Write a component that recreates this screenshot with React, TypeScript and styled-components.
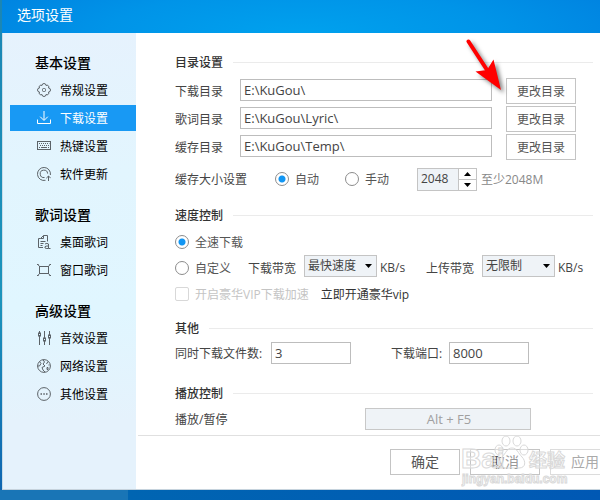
import React from "react";
import styled, { createGlobalStyle, css } from "styled-components";

const GlobalStyle = createGlobalStyle`
  * { box-sizing: border-box; }
  body { margin: 0; overflow: hidden; }
  body, button, input, select {
    font-family: "Open Sans", "Noto Sans CJK SC", sans-serif;
    font-size: 12px;
    line-height: 18px;
    color: #444;
  }
`;

const Desktop = styled.div`
  min-height: 100vh;
  padding: 0 0 10px 2px;
  display: flex;
  overflow: hidden;
  background:
    linear-gradient(90deg, #1975b6 0 128px, #0065b2 128px, #0058b4 100%) bottom / 100% 10px no-repeat,
    linear-gradient(180deg, #1b86b4, #1c94bc 60%, #0e63b0);
`;

const Window = styled.div`
  position: relative;
  flex: 1;
  min-width: 0;
  display: flex;
  flex-direction: column;
  background: #fff;
  border-bottom: 1px solid #c6d3dd;
`;

const TitleBar = styled.header`
  height: 33px;
  padding: 5px 15px;
  font-size: 14px;
  line-height: 20px;
  color: #fff;
  background: radial-gradient(ellipse 60% 250% at 50% 110%, #00a2ee 0%, #0094e8 55%, #0082e0 100%);
`;

const Body = styled.div`
  flex: 1;
  display: flex;
  min-height: 0;
`;

const Sidebar = styled.nav`
  width: 134px;
  flex: none;
  padding: 20px 0 0 8px;
  display: flex;
  flex-direction: column;
  gap: 18px;
  border-left: 1px solid #c9dce8;
  background: linear-gradient(180deg, #e6f2fd 0%, #e2f5fe 30%, #e0f6ff 60%, #e5f2fc 85%);
`;

const Group = styled.section`
  display: flex;
  flex-direction: column;
  gap: 2px;
`;

const GroupTitle = styled.h2`
  margin: 0 0 2px;
  padding-left: 24px;
  font-size: 14px;
  line-height: 20px;
  font-weight: 500;
  color: #000;
`;

const NavItem = styled.button<{ $active?: boolean }>`
  height: 26px;
  padding: 0 0 0 27px;
  margin-left: -1px;
  display: flex;
  align-items: center;
  gap: 9px;
  border: 0;
  text-align: left;
  color: ${p => (p.$active ? "#fff" : "#000")};
  background: ${p => (p.$active ? "#1899f4" : "transparent")};
  svg { flex: none; color: ${p => (p.$active ? "#fff" : "#5c6368")}; }
  span { padding-top: 2px; }
`;

const Content = styled.div`
  flex: 1;
  min-width: 0;
  display: flex;
  flex-direction: column;
`;

const Panel = styled.main`
  flex: 1;
  padding: 20px 7px 3px 39px;
  display: flex;
  flex-direction: column;
`;

const Section = styled.section<{ $space?: number }>`
  margin-top: ${p => p.$space ?? 0}px;
`;

const SectionTitle = styled.h3`
  margin: 0;
  height: 18px;
  display: flex;
  align-items: center;
  gap: 10px;
  font-size: 12px;
  line-height: 18px;
  font-weight: 500;
  color: #333;
  span { padding-top: 2px; }
  &::after { content: ""; flex: 1; height: 1px; background: #ebebeb; }
`;

const Rows = styled.div<{ $top: number }>`
  margin-top: ${p => p.$top}px;
  display: grid;
  gap: 2px;
`;

const PathRow = styled.div`
  display: grid;
  grid-template-columns: 65px minmax(0, 1fr) 70px;
  align-items: center;
  padding-right: 17px;
`;

const Row = styled.div<{ $height?: number }>`
  height: ${p => p.$height ?? 26}px;
  display: flex;
  align-items: center;
  white-space: nowrap;
`;

const field = css`
  height: 22px;
  padding: 0 3px;
  border: 1px solid #bdbdbd;
  border-radius: 0;
  background: #fff;
  color: #444;
  font-size: 13px;
`;

const PathInput = styled.input`
  ${field}
  width: calc(100% - 14px);
  margin-bottom: 2px;
`;

const SmallInput = styled.input`
  ${field}
  width: 80px;
`;

const PushButton = styled.button<{ $faded?: boolean; $large?: boolean }>`
  flex: none;
  width: 70px;
  height: 26px;
  padding: ${p => (p.$large ? 0 : 2)}px 0 0;
  border: 1px solid ${p => (p.$faded ? "#dcdcdc" : "#c4c4c4")};
  background: #fff;
  font-size: ${p => (p.$large ? 14 : 12)}px;
  color: ${p => (p.$faded ? "#aaa" : "#555")};
`;

const KeyButton = styled.button`
  width: 166px;
  height: 22px;
  padding: 0 0 0 2px;
  border: 1px solid #c8c8c8;
  background: #eff3f7;
  font-size: 13px;
  color: #a0a0a0;
`;

const Choice = styled.label<{ $width?: number; $disabled?: boolean }>`
  width: ${p => (p.$width ? `${p.$width}px` : "auto")};
  display: flex;
  align-items: center;
  gap: 6px;
  color: ${p => (p.$disabled ? "#c4c4c4" : "#555")};
  span { padding-top: 2px; }
`;

const Radio = styled.input.attrs({ type: "radio" })`
  appearance: none;
  flex: none;
  width: 14px;
  height: 14px;
  margin: 0;
  border: 1px solid #8c8c8c;
  border-radius: 50%;
  background: #fff;
  &:checked { background: radial-gradient(circle, #1296f3 0 3px, #fff 4px); }
`;

const CheckBox = styled.input.attrs({ type: "checkbox" })`
  appearance: none;
  flex: none;
  width: 14px;
  height: 14px;
  margin: 0;
  border: 1px solid #d8d8d8;
  border-radius: 2px;
`;

const Label = styled.label<{ $width?: number }>`
  width: ${p => (p.$width ? `${p.$width}px` : "auto")};
  flex: none;
  padding-top: 2px;
`;

const PortLabel = styled(Label)`
  padding-left: 40px;
`;

const Unit = styled.span<{ $width?: number }>`
  width: ${p => (p.$width ? `${p.$width}px` : "auto")};
  flex: none;
  margin-left: 3px;
`;

const Hint = styled.span`
  margin-left: 4px;
  padding-top: 2px;
  color: #888;
`;

const Spinner = styled.div`
  display: flex;
  width: 60px;
  height: 23px;
  border: 1px solid #c4c4c4;
`;

const SpinnerInput = styled.input`
  width: 41px;
  padding: 0 3px;
  border: 0;
  border-right: 1px solid #c4c4c4;
  background: #eff3f7;
`;

const SpinnerButtons = styled.div`
  flex: 1;
  display: grid;
  grid-template-rows: 1fr 1fr;
`;

const Step = styled.button`
  padding: 0;
  border: 0;
  display: grid;
  place-items: center;
  background: #fff;
  color: #000;
  & + & { border-top: 1px solid #c4c4c4; }
`;

const SelectBox = styled.span<{ $width: number }>`
  position: relative;
  width: ${p => p.$width}px;
  height: 22px;
  flex: none;
  margin-bottom: 4px;
  svg { position: absolute; right: 5px; top: 9px; pointer-events: none; color: #000; }
`;

const Select = styled.select`
  appearance: none;
  width: 100%;
  height: 22px;
  padding: 0 3px;
  border: 1px solid #c4c4c4;
  border-radius: 0;
  background: #eff3f7;
`;

const Promo = styled.a`
  margin-left: 12px;
  padding-top: 2px;
  color: #333;
  text-decoration: none;
`;

const Footer = styled.footer`
  position: relative;
  height: 54px;
  margin-left: 2px;
  padding: 13px 0 0 252px;
  display: flex;
  gap: 10px;
  overflow: hidden;
  border-top: 1px solid #e0e0e0;
`;

const Watermark = styled.svg`
  position: absolute;
  right: 31px;
  bottom: 0;
  pointer-events: none;
`;

const Pointer = styled.svg`
  position: absolute;
  top: 34px;
  right: 90px;
  pointer-events: none;
  filter: drop-shadow(3px 3px 2px rgba(0, 0, 0, 0.5));
`;

type IconName =
  | "gear" | "download" | "keyboard" | "update" | "desk" | "frame" | "sliders" | "globe" | "more";

const drawings: Record<IconName, React.ReactNode> = {
  gear: (
    <>
      <path d="M5 2.5a2 2 0 0 1 4 0a1.8 1.8 0 0 1 2.5 2.500a2 2 0 0 1 0 4a1.8 1.8 0 0 1-2.500 2.500a2 2 0 0 1-4 0a1.8 1.8 0 0 1-2.500-2.500a2 2 0 0 1 0-4a1.8 1.8 0 0 1 2.500-2.500Z" />
      <rect x="5.5" y="5.5" width="3" height="3" rx="1" />
    </>
  ),
  download: <path d="M7 0v9M3.2 5.7 7 9.5l3.8-3.8M.5 8.5v4h13v-4" />,
  keyboard: (
    <>
      <rect x=".5" y="2.5" width="13" height="8" />
      <path strokeDasharray="1 1" d="M2 4.5h10.5M3 6.500h9M2 8.5h1" />
      <path d="M4 8.5h6M11 8.5h1" />
    </>
  ),
  update: (
    <>
      <path d="M8.5 13.3A6.5 6.5 0 1 1 13.4 8" />
      <path d="M7.5 10.5A3.7 3.7 0 1 1 10.6 6.6M11.5 14V9M9.3 11.2 11.5 9l2.2 2.2" />
    </>
  ),
  desk: (
    <>
      <path d="M6 12.5H1.5v-9h2M3.5 3.5l3-3h4v6M3.5 3.5h3v-3M3.5 6.5h5M3.5 8.5h3M3.5 10.5h2" />
      <path d="M8 9q2-1.3 3.5 0v4.5H9.2Q7.5 13.3 8 11.7q.5-.8 3.5-.7M11.5 13.5h2" />
    </>
  ),
  frame: (
    <>
      <rect x="2.5" y="3.5" width="9" height="7" />
      <path d="M0 1.5h1.5M12.5 1.5H14M0 12.5h1.5M12.5 12.5H14M.5 1l2 2.5M13.5 1l-2 2.5M.5 13l2-2.5M13.5 13l-2-2.5" />
    </>
  ),
  sliders: (
    <>
      <path d="M2.5 0v2M2.5 5v9M7.5 0v7M7.5 10v4M12.5 0v4M12.5 7v7" />
      <rect x="1.5" y="2" width="2" height="3" />
      <rect x="6.5" y="7" width="2" height="3" />
      <rect x="11.5" y="4" width="2" height="3" />
    </>
  ),
  globe: (
    <>
      <circle cx="7" cy="7" r="6.4" />
      <path d="M2.5 2.5 4 4.5 2.5 7h-2M6 .7 7.5 3 6 5l2 2-3 1.5 1 2.5 2 2M11 2.5 9.5 5M10 8.5h1v2h-1zM11.5 6h1" />
    </>
  ),
  more: (
    <>
      <circle cx="7" cy="7" r="6.4" />
      <path strokeWidth="1.5" d="M3.5 7H5M6.3 7h1.5M9 7h1.5" />
    </>
  ),
};

const Icon = ({ name }: { name: IconName }) => (
  <svg width="14" height="14" viewBox="0 0 14 14" fill="none" stroke="currentColor" strokeWidth="1" aria-hidden="true">
    {drawings[name]}
  </svg>
);

const Triangle = ({ up }: { up?: boolean }) => (
  <svg width="7" height="4" viewBox="0 0 7 4" fill="currentColor" aria-hidden="true">
    <path d={up ? "M0 4h7L3.5 0z" : "M0 0h7L3.5 4z"} />
  </svg>
);

const Brand = () => (
  <Watermark width="108" height="54" viewBox="0 0 108 54" fill="#fff" fillOpacity="0.4" stroke="#d9d9d9" strokeWidth="1" aria-hidden="true">
    <ellipse cx="45" cy="6" rx="4" ry="5" />
    <ellipse cx="56" cy="6" rx="4" ry="5" />
    <ellipse cx="38" cy="15" rx="4" ry="5" />
    <ellipse cx="63" cy="15" rx="4" ry="5" />
    <path d="M51 13c-5 0-6 5-10 9s-4 11 3 11h14c7 0 7-7 3-11s-5-9-10-9z" />
    <g fontFamily='"Liberation Sans", "Noto Sans CJK SC", sans-serif' fontWeight="700">
      <text x="0" y="33" fontSize="28">Bai</text>
      <text x="68" y="32" fontSize="18">经验</text>
      <text x="1" y="48" fontSize="12">jingyan.baidu.com</text>
    </g>
  </Watermark>
);

const groups: { title: string; items: { icon: IconName; text: string }[] }[] = [
  {
    title: "基本设置",
    items: [
      { icon: "gear", text: "常规设置" },
      { icon: "download", text: "下载设置" },
      { icon: "keyboard", text: "热键设置" },
      { icon: "update", text: "软件更新" },
    ],
  },
  {
    title: "歌词设置",
    items: [
      { icon: "desk", text: "桌面歌词" },
      { icon: "frame", text: "窗口歌词" },
    ],
  },
  {
    title: "高级设置",
    items: [
      { icon: "sliders", text: "音效设置" },
      { icon: "globe", text: "网络设置" },
      { icon: "more", text: "其他设置" },
    ],
  },
];

const paths = [
  { id: "download-path", label: "下载目录", value: "E:\\KuGou\\" },
  { id: "lyric-path", label: "歌词目录", value: "E:\\KuGou\\Lyric\\" },
  { id: "cache-path", label: "缓存目录", value: "E:\\KuGou\\Temp\\" },
];

export default function App() {
  return (
    <Desktop>
      <GlobalStyle />
      <Window>
        <TitleBar>选项设置</TitleBar>
        <Body>
          <Sidebar>
            {groups.map(group => (
              <Group key={group.title}>
                <GroupTitle>{group.title}</GroupTitle>
                {group.items.map(item => (
                  <NavItem key={item.text} $active={item.icon === "download"}>
                    <Icon name={item.icon} />
                    <span>{item.text}</span>
                  </NavItem>
                ))}
              </Group>
            ))}
          </Sidebar>
          <Content>
            <Panel>
              <Section>
                <SectionTitle><span>目录设置</span></SectionTitle>
                <Rows $top={7}>
                  {paths.map(path => (
                    <PathRow key={path.id}>
                      <Label htmlFor={path.id}>{path.label}</Label>
                      <PathInput id={path.id} defaultValue={path.value} />
                      <PushButton>更改目录</PushButton>
                    </PathRow>
                  ))}
                </Rows>
                <Rows $top={6}>
                  <Row>
                    <Label as="span" $width={100}>缓存大小设置</Label>
                    <Choice $width={70}><Radio name="cache" defaultChecked /><span>自动</span></Choice>
                    <Choice $width={72}><Radio name="cache" /><span>手动</span></Choice>
                    <Spinner>
                      <SpinnerInput aria-label="缓存大小" defaultValue="2048" />
                      <SpinnerButtons>
                        <Step aria-label="增加"><Triangle up /></Step>
                        <Step aria-label="减少"><Triangle /></Step>
                      </SpinnerButtons>
                    </Spinner>
                    <Hint>至少2048M</Hint>
                  </Row>
                </Rows>
              </Section>

              <Section $space={14}>
                <SectionTitle><span>速度控制</span></SectionTitle>
                <Rows $top={6}>
                  <Row $height={24}>
                    <Choice><Radio name="speed" defaultChecked /><span>全速下载</span></Choice>
                  </Row>
                  <Row $height={24}>
                    <Choice $width={73}><Radio name="speed" /><span>自定义</span></Choice>
                    <Label htmlFor="down-speed" $width={56}>下载带宽</Label>
                    <SelectBox $width={73}>
                      <Select id="down-speed"><option>最快速度</option></Select>
                      <Triangle />
                    </SelectBox>
                    <Unit $width={46}>KB/s</Unit>
                    <Label htmlFor="up-speed" $width={56}>上传带宽</Label>
                    <SelectBox $width={73}>
                      <Select id="up-speed"><option>无限制</option></Select>
                      <Triangle />
                    </SelectBox>
                    <Unit>KB/s</Unit>
                  </Row>
                  <Row $height={24}>
                    <Choice $disabled><CheckBox disabled /><span>开启豪华VIP下载加速</span></Choice>
                    <Promo href="#vip">立即开通豪华vip</Promo>
                  </Row>
                </Rows>
              </Section>

              <Section $space={13}>
                <SectionTitle><span>其他</span></SectionTitle>
                <Rows $top={3}>
                  <Row>
                    <Label htmlFor="file-count" $width={96}>同时下载文件数:</Label>
                    <SmallInput id="file-count" defaultValue="3" />
                    <PortLabel htmlFor="port" $width={98}>下载端口:</PortLabel>
                    <SmallInput id="port" defaultValue="8000" />
                  </Row>
                </Rows>
              </Section>

              <Section $space={18}>
                <SectionTitle><span>播放控制</span></SectionTitle>
                <Rows $top={4}>
                  <Row>
                    <Label htmlFor="play-key" $width={190}>播放/暂停</Label>
                    <KeyButton id="play-key">Alt + F5</KeyButton>
                  </Row>
                </Rows>
              </Section>
            </Panel>
            <Footer>
              <PushButton $large>确定</PushButton>
              <PushButton $large>取消</PushButton>
              <PushButton $large $faded>应用</PushButton>
              <Brand />
            </Footer>
          </Content>
        </Body>
        <Pointer width="46" height="60" viewBox="0 0 46 60" aria-hidden="true">
          <path d="M4.5 7.5 25 39" stroke="#f00" strokeWidth="4" strokeLinecap="round" />
          <path d="M37 56 11.5 37.5 23 36 29.5 25.5Z" fill="#f00" />
        </Pointer>
      </Window>
    </Desktop>
  );
}
